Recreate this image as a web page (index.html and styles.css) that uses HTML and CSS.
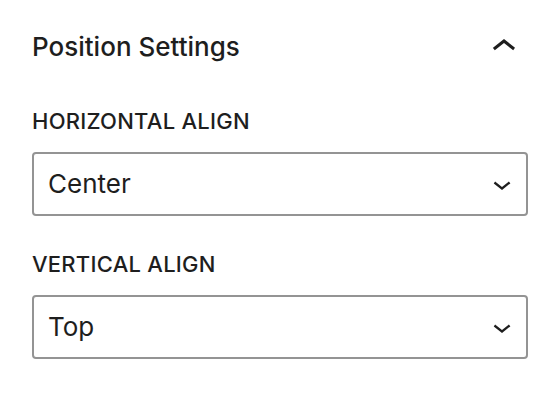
FILE: index.html
```html
<!DOCTYPE html>
<html>
<head>
<meta charset="utf-8">
<link rel="stylesheet" href="styles.css">
</head>
<body>
<div class="panel">
  <div class="header">
    <h2 class="title">Position Settings</h2>
    <svg class="toggle" viewBox="0 0 24 24" width="48" height="48" aria-hidden="true"><path d="M6.5 12.4L12 8l5.5 4.4-.9 1.2L12 10l-4.6 3.6-1-1.2z"/></svg>
  </div>
  <div class="field">
    <div class="label">HORIZONTAL ALIGN</div>
    <div class="select">
      <span class="value">Center</span>
      <svg class="chev" viewBox="0 0 24 24" width="36" height="36" aria-hidden="true"><path d="M17.5 11.6L12 16l-5.5-4.4.9-1.2L12 14l4.6-3.6 1 1.2z"/></svg>
    </div>
  </div>
  <div class="field">
    <div class="label">VERTICAL ALIGN</div>
    <div class="select">
      <span class="value">Top</span>
      <svg class="chev" viewBox="0 0 24 24" width="36" height="36" aria-hidden="true"><path d="M17.5 11.6L12 16l-5.5-4.4.9-1.2L12 14l4.6-3.6 1 1.2z"/></svg>
    </div>
  </div>
</div>
</body>
</html>
```
FILE: styles.css
```css
html, body {
  margin: 0;
  padding: 0;
  background: #ffffff;
}
body {
  font-family: Inter, "Noto Sans", "Liberation Sans", sans-serif;
  color: #1e1e1e;
}
.panel {
  padding: 23px 32px 0;
}
.header {
  display: flex;
  align-items: center;
  justify-content: space-between;
  height: 48px;
}
.title {
  margin: 0;
  font-size: 26px;
  font-weight: 500;
  line-height: 32px;
}
.toggle {
  fill: #1e1e1e;
  display: block;
}
.field {
  margin-top: 34px;
}
.field + .field {
  margin-top: 32px;
}
.label {
  font-size: 22px;
  font-weight: 500;
  line-height: 32px;
  letter-spacing: 0.25px;
  text-transform: uppercase;
}
.select {
  margin-top: 15px;
  height: 64px;
  box-sizing: border-box;
  border: 2px solid #949494;
  border-radius: 4px;
  display: flex;
  align-items: center;
  justify-content: space-between;
  padding: 0 6px 0 14px;
}
.value {
  font-size: 26px;
  line-height: 32px;
}
.chev {
  display: block;
  fill: #1e1e1e;
}
```
